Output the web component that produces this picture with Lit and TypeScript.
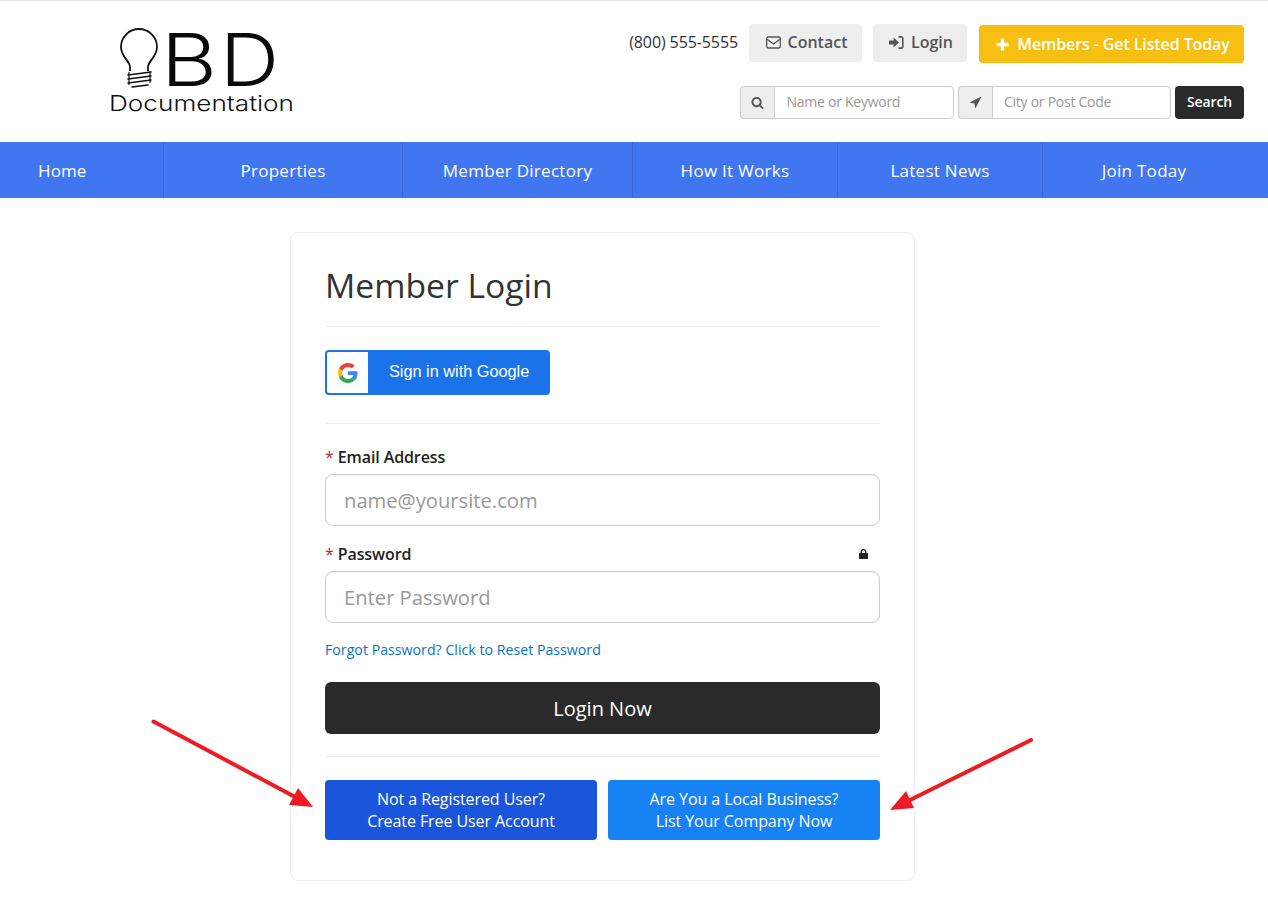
import { LitElement, html, css, svg } from "lit";
import { customElement } from "lit/decorators.js";

const NAV = ["Home", "Properties", "Member Directory", "How It Works", "Latest News", "Join Today"];

const searchIcon = html`<svg class="ico" width="13" height="13" viewBox="0 0 1792 1792"><path fill="currentColor" d="M1216 832q0-185-131.5-316.5t-316.5-131.5-316.5 131.5-131.5 316.5 131.5 316.5 316.5 131.5 316.5-131.5 131.5-316.5zm512 832q0 52-38 90t-90 38q-54 0-90-38l-343-342q-179 124-399 124-143 0-273.5-55.5t-225-150-150-225-55.5-273.5 55.5-273.5 150-225 225-150 273.5-55.5 273.5 55.5 225 150 150 225 55.5 273.5q0 220-124 399l343 343q37 37 37 90z"/></svg>`;
const arrowIcon = html`<svg class="ico" width="13" height="13" viewBox="0 0 12 12"><path fill="currentColor" d="M11.6.4 5.9 11.6 5 7 .4 6.1z"/></svg>`;
const envIcon = html`<svg class="ico" width="15" height="13" viewBox="0 0 15 13"><rect x=".7" y="1" width="13.6" height="11" rx="1.5" fill="none" stroke="currentColor" stroke-width="1.3"/><path d="M1 3.2 7.5 8l6.5-4.8" fill="none" stroke="currentColor" stroke-width="1.3"/></svg>`;
const signIcon = html`<svg class="ico" width="15" height="13" viewBox="0 0 15 13"><path fill="currentColor" d="M0 4.6h4.6V1.4L10 6.5l-5.4 5.1V8.4H0z"/><path fill="none" stroke="currentColor" stroke-width="1.6" d="M9.5.9h2.6c1 0 1.7.7 1.7 1.7v7.8c0 1-.7 1.7-1.7 1.7H9.5"/></svg>`;
const plusIcon = html`<svg class="ico" width="13" height="13" viewBox="0 0 13 13"><path fill="currentColor" d="M4.8.5h3.4v4.3h4.3v3.4H8.200v4.300H4.800V8.200H.5V4.800h4.300z"/></svg>`;
const lockIcon = html`<svg width="9" height="10" viewBox="0 0 9 10"><path fill="none" stroke="#222" stroke-width="1.300" d="M2.200 4.500V3a2.300 2.300 0 0 1 4.600 0v1.500"/><rect y="4" width="9" height="6" rx=".8" fill="#222"/></svg>`;
const googleIcon = html`<svg width="20" height="20" viewBox="0 0 48 48">
  <path fill="#EA4335" d="M24 9.500c3.540 0 6.710 1.220 9.210 3.600l6.850-6.850C35.900 2.380 30.470 0 24 0 14.620 0 6.510 5.380 2.560 13.220l7.980 6.190C12.430 13.720 17.740 9.500 24 9.500z"/>
  <path fill="#4285F4" d="M46.980 24.550c0-1.570-.15-3.090-.38-4.550H24v9.020h12.940c-.58 2.960-2.260 5.480-4.780 7.180l7.730 6c4.510-4.180 7.090-10.360 7.090-17.650z"/>
  <path fill="#FBBC05" d="M10.530 28.590c-.48-1.450-.76-2.990-.76-4.590s.27-3.140.76-4.590l-7.980-6.190C.92 16.460 0 20.120 0 24c0 3.880.92 7.540 2.560 10.780l7.970-6.190z"/>
  <path fill="#34A853" d="M24 48c6.480 0 11.930-2.130 15.890-5.810l-7.730-6c-2.150 1.450-4.920 2.300-8.160 2.300-6.260 0-11.570-4.220-13.470-9.910l-7.980 6.190C6.510 42.620 14.620 48 24 48z"/>
</svg>`;

const logo = html`<svg class="logo" width="190" height="96" viewBox="0 0 190 96">
  ${svg`
  <path d="M22 48V44C22 38 13 34 13 24A18 18 0 0 1 49 24C49 34 40 38 40 44V48" fill="none" stroke="#111" stroke-width="1.800"/>
  <path d="M21 49V62M42 48V60" fill="none" stroke="#111" stroke-width="1.200"/>
  <path d="M20 52 43 49M20 56 43 53M20 60 43 57M24 64 40 62" fill="none" stroke="#111" stroke-width="1.600" stroke-linecap="round"/>
  <text x="53" y="63" font-family="Inter" font-size="73" font-weight="350" textLength="56" lengthAdjust="spacingAndGlyphs" fill="#0a0a0a">B</text>
  <text x="112" y="63" font-family="Inter" font-size="73" font-weight="350" textLength="59" lengthAdjust="spacingAndGlyphs" fill="#0a0a0a">D</text>
  <text x="1" y="88" font-family="Inter" font-size="22" font-weight="300" textLength="185" lengthAdjust="spacingAndGlyphs" fill="#111">Documentation</text>
  `}
</svg>`;

@customElement("app-root")
export class AppRoot extends LitElement {
  static styles = css`
    :host { display: block; position: relative; height: 910px; overflow: hidden; background: #fff;
      font-family: "Open Sans", sans-serif; color: #333; }
    .header { border-top: 1px solid #e2e6f0; height: 141px; box-sizing: content-box; display: flex;
      justify-content: space-between; padding: 0 24px 0 108px; }
    .logo { margin-top: 22px; overflow: visible; }
    .right { display: flex; flex-direction: column; align-items: flex-end; padding-top: 23px; gap: 22px; }
    .row1 { display: flex; align-items: flex-start; height: 40px; }
    .phone { font-size: 16px; line-height: 36px; color: #333; margin-right: 11px; letter-spacing: -.1px; }
    .btn { display: flex; align-items: center; justify-content: center; gap: 7px; height: 38px; border-radius: 4px;
      font-size: 16px; font-weight: 600; box-sizing: border-box; }
    .grey { background: #eee; color: #555; margin-right: 11px; padding: 0 0 2px 2px; }
    .contact { width: 113px; }
    .login { width: 94px; margin-right: 12px; }
    .yellow { background: #f6bf12; color: #fff; width: 265px; margin-top: 1px; gap: 8px; padding-left: 3px; letter-spacing: -.1px; }
    .row2 { display: flex; height: 33px; }
    .group { display: flex; margin-right: 4px; }
    .addon { width: 34px; height: 33px; box-sizing: border-box; display: flex; align-items: center; justify-content: center;
      background: #eee; border: 1px solid #ccc; border-radius: 4px 0 0 4px; border-right: 0; color: #555; }
    .field { height: 33px; box-sizing: border-box; border: 1px solid #ccc; border-radius: 0 4px 4px 0; background: #fff;
      padding-left: 11.5px; font-size: 14px; line-height: 30px; color: #999; letter-spacing: -.26px; }
    .f1 { width: 180px; }
    .f2 { width: 179px; padding-left: 11px; }
    .search { width: 69px; height: 33px; background: #2a2a2a; color: #fff; font-size: 14px; font-weight: 600;
      display: flex; align-items: center; justify-content: center; border-radius: 4px; letter-spacing: -.1px; padding-bottom: 3px; box-sizing: border-box; }
    nav { display: grid; grid-template-columns: 163px 239px 230px 205px 205px 226px; height: 56px; background: #4076f0; }
    nav div { color: #fff; font-size: 17px; font-weight: 500; letter-spacing: .28px; display: flex; align-items: center; justify-content: center;
      border-left: 1px solid #3a68d8; box-sizing: border-box; }
    nav div:first-child { justify-content: flex-start; padding-left: 38px; border-left: 0; letter-spacing: .1px; }
    nav div:last-child { padding-right: 23px; }
    .card { width: 625px; height: 649px; box-sizing: border-box; margin: 34px 0 0 290px; border: 1px solid #eee; border-radius: 8px;
      padding: 0 34px; }
    h1 { margin: 0; height: 94px; box-sizing: border-box; padding-top: 29px; font-size: 33.7px; font-weight: 400; line-height: 46px; color: #333;
      border-bottom: 1px solid #eee; }
    .gwrap { height: 97px; box-sizing: border-box; padding-top: 23px; border-bottom: 1px solid #eee; }
    .google { width: 225px; height: 45px; border-radius: 4px; background: #1a73e8; display: flex; align-items: center; box-sizing: border-box; padding: 2px; }
    .gbox { width: 41px; height: 41px; background: #fff; display: flex; align-items: center; justify-content: center; border-radius: 2px 0 0 2px; }
    .gtext { color: #fff; font-family: "Liberation Sans", Arial, sans-serif; font-size: 16.3px; margin-left: 21px; padding-bottom: 2px; }
    .label { display: flex; justify-content: space-between; align-items: center; height: 24px; font-size: 16px; font-weight: 600; color: #222; letter-spacing: -.1px; }
    .label i { color: #a33; font-style: normal; font-weight: 400; margin-right: 4px; }
    .l1 { margin-top: 21px; margin-bottom: 5px; }
    .l2 { margin-top: 16px; margin-bottom: 5px; }
    .lockw { display: flex; margin-right: 12px; }
    .input { height: 52px; box-sizing: border-box; border: 1px solid #ccc; border-radius: 8px; padding-left: 18px; font-size: 20.2px;
      line-height: 51px; color: #999; background: #fff; box-shadow: inset 0 1px 1px rgba(0,0,0,.05); }
    .forgot { margin-top: 16px; height: 22px; font-size: 14.2px; line-height: 22px; color: #0b72c4; }
    .loginbtn { margin-top: 21px; height: 52px; background: #2a2a2a; color: #fff; border-radius: 6px; font-size: 20px; font-weight: 400;
      display: flex; align-items: center; justify-content: center; }
    .rule { margin-top: 22px; border-top: 1px solid #eee; }
    .cta { margin-top: 23px; display: grid; grid-template-columns: 272px 272px; gap: 11px; }
    .cta div { height: 60px; border-radius: 4px; color: #fff; font-size: 16px; letter-spacing: -.08px; line-height: 22px; text-align: center;
      display: flex; align-items: center; justify-content: center; }
    .c1 { background: #1a56db; }
    .c2 { background: #1782f3; }
    .arrows { position: absolute; left: 0; top: 0; pointer-events: none; }
  `;

  render() {
    return html`
      <div class="header">
        ${logo}
        <div class="right">
          <div class="row1">
            <span class="phone">(800) 555-5555</span>
            <div class="btn grey contact">${envIcon}Contact</div>
            <div class="btn grey login">${signIcon}Login</div>
            <div class="btn yellow">${plusIcon}Members - Get Listed Today</div>
          </div>
          <div class="row2">
            <div class="group"><div class="addon">${searchIcon}</div><div class="field f1">Name or Keyword</div></div>
            <div class="group"><div class="addon">${arrowIcon}</div><div class="field f2">City or Post Code</div></div>
            <div class="search">Search</div>
          </div>
        </div>
      </div>
      <nav>${NAV.map((n) => html`<div>${n}</div>`)}</nav>
      <div class="card">
        <h1>Member Login</h1>
        <div class="gwrap">
          <div class="google"><div class="gbox">${googleIcon}</div><span class="gtext">Sign in with Google</span></div>
        </div>
        <div class="label l1"><span><i>*</i>Email Address</span></div>
        <div class="input">name@yoursite.com</div>
        <div class="label l2"><span><i>*</i>Password</span><span class="lockw">${lockIcon}</span></div>
        <div class="input">Enter Password</div>
        <div class="forgot">Forgot Password? Click to Reset Password</div>
        <div class="loginbtn">Login Now</div>
        <div class="rule"></div>
        <div class="cta">
          <div class="c1">Not a Registered User?<br />Create Free User Account</div>
          <div class="c2">Are You a Local Business?<br />List Your Company Now</div>
        </div>
      </div>
      <svg class="arrows" width="1268" height="910" viewBox="0 0 1268 910">
        <path d="M153.500 721.500 297 798" stroke="#ed1c24" stroke-width="4" stroke-linecap="round" fill="none"/>
        <path d="M313 807 289 805 298 788z" fill="#ed1c24"/>
        <path d="M1031 740 908 801" stroke="#ed1c24" stroke-width="4" stroke-linecap="round" fill="none"/>
        <path d="M890 810 906 791 914 808z" fill="#ed1c24"/>
      </svg>
    `;
  }
}
